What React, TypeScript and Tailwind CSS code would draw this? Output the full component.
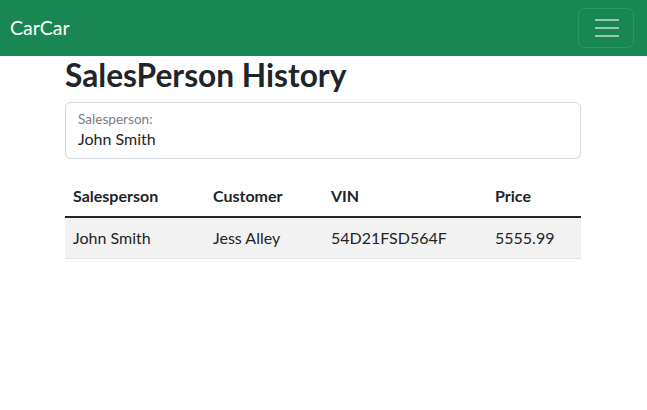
export default function App() {
  const rows = [
    { salesperson: "John Smith", customer: "Jess Alley", vin: "54D21FSD564F", price: "5555.99" },
  ];
  return (
    <div className="min-h-[410px] bg-white font-['Lato',sans-serif] text-[#212529]">
      <nav className="flex h-[56px] items-center justify-between bg-[#198754] pl-[10px] pr-[13px]">
        <span className="text-[19.5px] leading-[30px] text-white">CarCar</span>
        <button className="flex h-[40px] w-[56px] items-center justify-center rounded-md border border-white/10">
          <svg width="30" height="30" viewBox="0 0 30 30">
            <path d="M4 7h24M4 15h24M4 23h24" stroke="rgba(255,255,255,0.55)" strokeWidth="2" strokeLinecap="butt" />
          </svg>
        </button>
      </nav>
      <main className="mx-auto w-[541px] pl-3 pr-[13px]">
        <h1 className="mb-2 text-[31.7px] font-bold leading-[38px]">SalesPerson History</h1>
        <div className="mb-[17px] flex h-[57px] flex-col rounded-md border border-[#d5d8dc] px-3 pt-[8px]">
          <span className="text-[13.6px] leading-[17px] text-[#7a7d81]">Salesperson:</span>
          <span className="text-[16px] leading-[22px]">John Smith</span>
        </div>
        <table className="w-full border-collapse text-left text-[16px] leading-[24px]">
          <thead>
            <tr>
              <th className="w-[140px] px-2 py-2 font-bold">Salesperson</th>
              <th className="w-[118px] px-2 py-2 font-bold">Customer</th>
              <th className="w-[164px] px-2 py-2 font-bold">VIN</th>
              <th className="px-2 py-2 font-bold">Price</th>
            </tr>
          </thead>
          <tbody className="border-t-2 border-[#212529]">
            {rows.map((r) => (
              <tr key={r.vin} className="border-b border-[#dee2e6] bg-[#f2f2f2]">
                <td className="px-2 py-2">{r.salesperson}</td>
                <td className="px-2 py-2">{r.customer}</td>
                <td className="px-2 py-2">{r.vin}</td>
                <td className="px-2 py-2">{r.price}</td>
              </tr>
            ))}
          </tbody>
        </table>
      </main>
    </div>
  );
}
